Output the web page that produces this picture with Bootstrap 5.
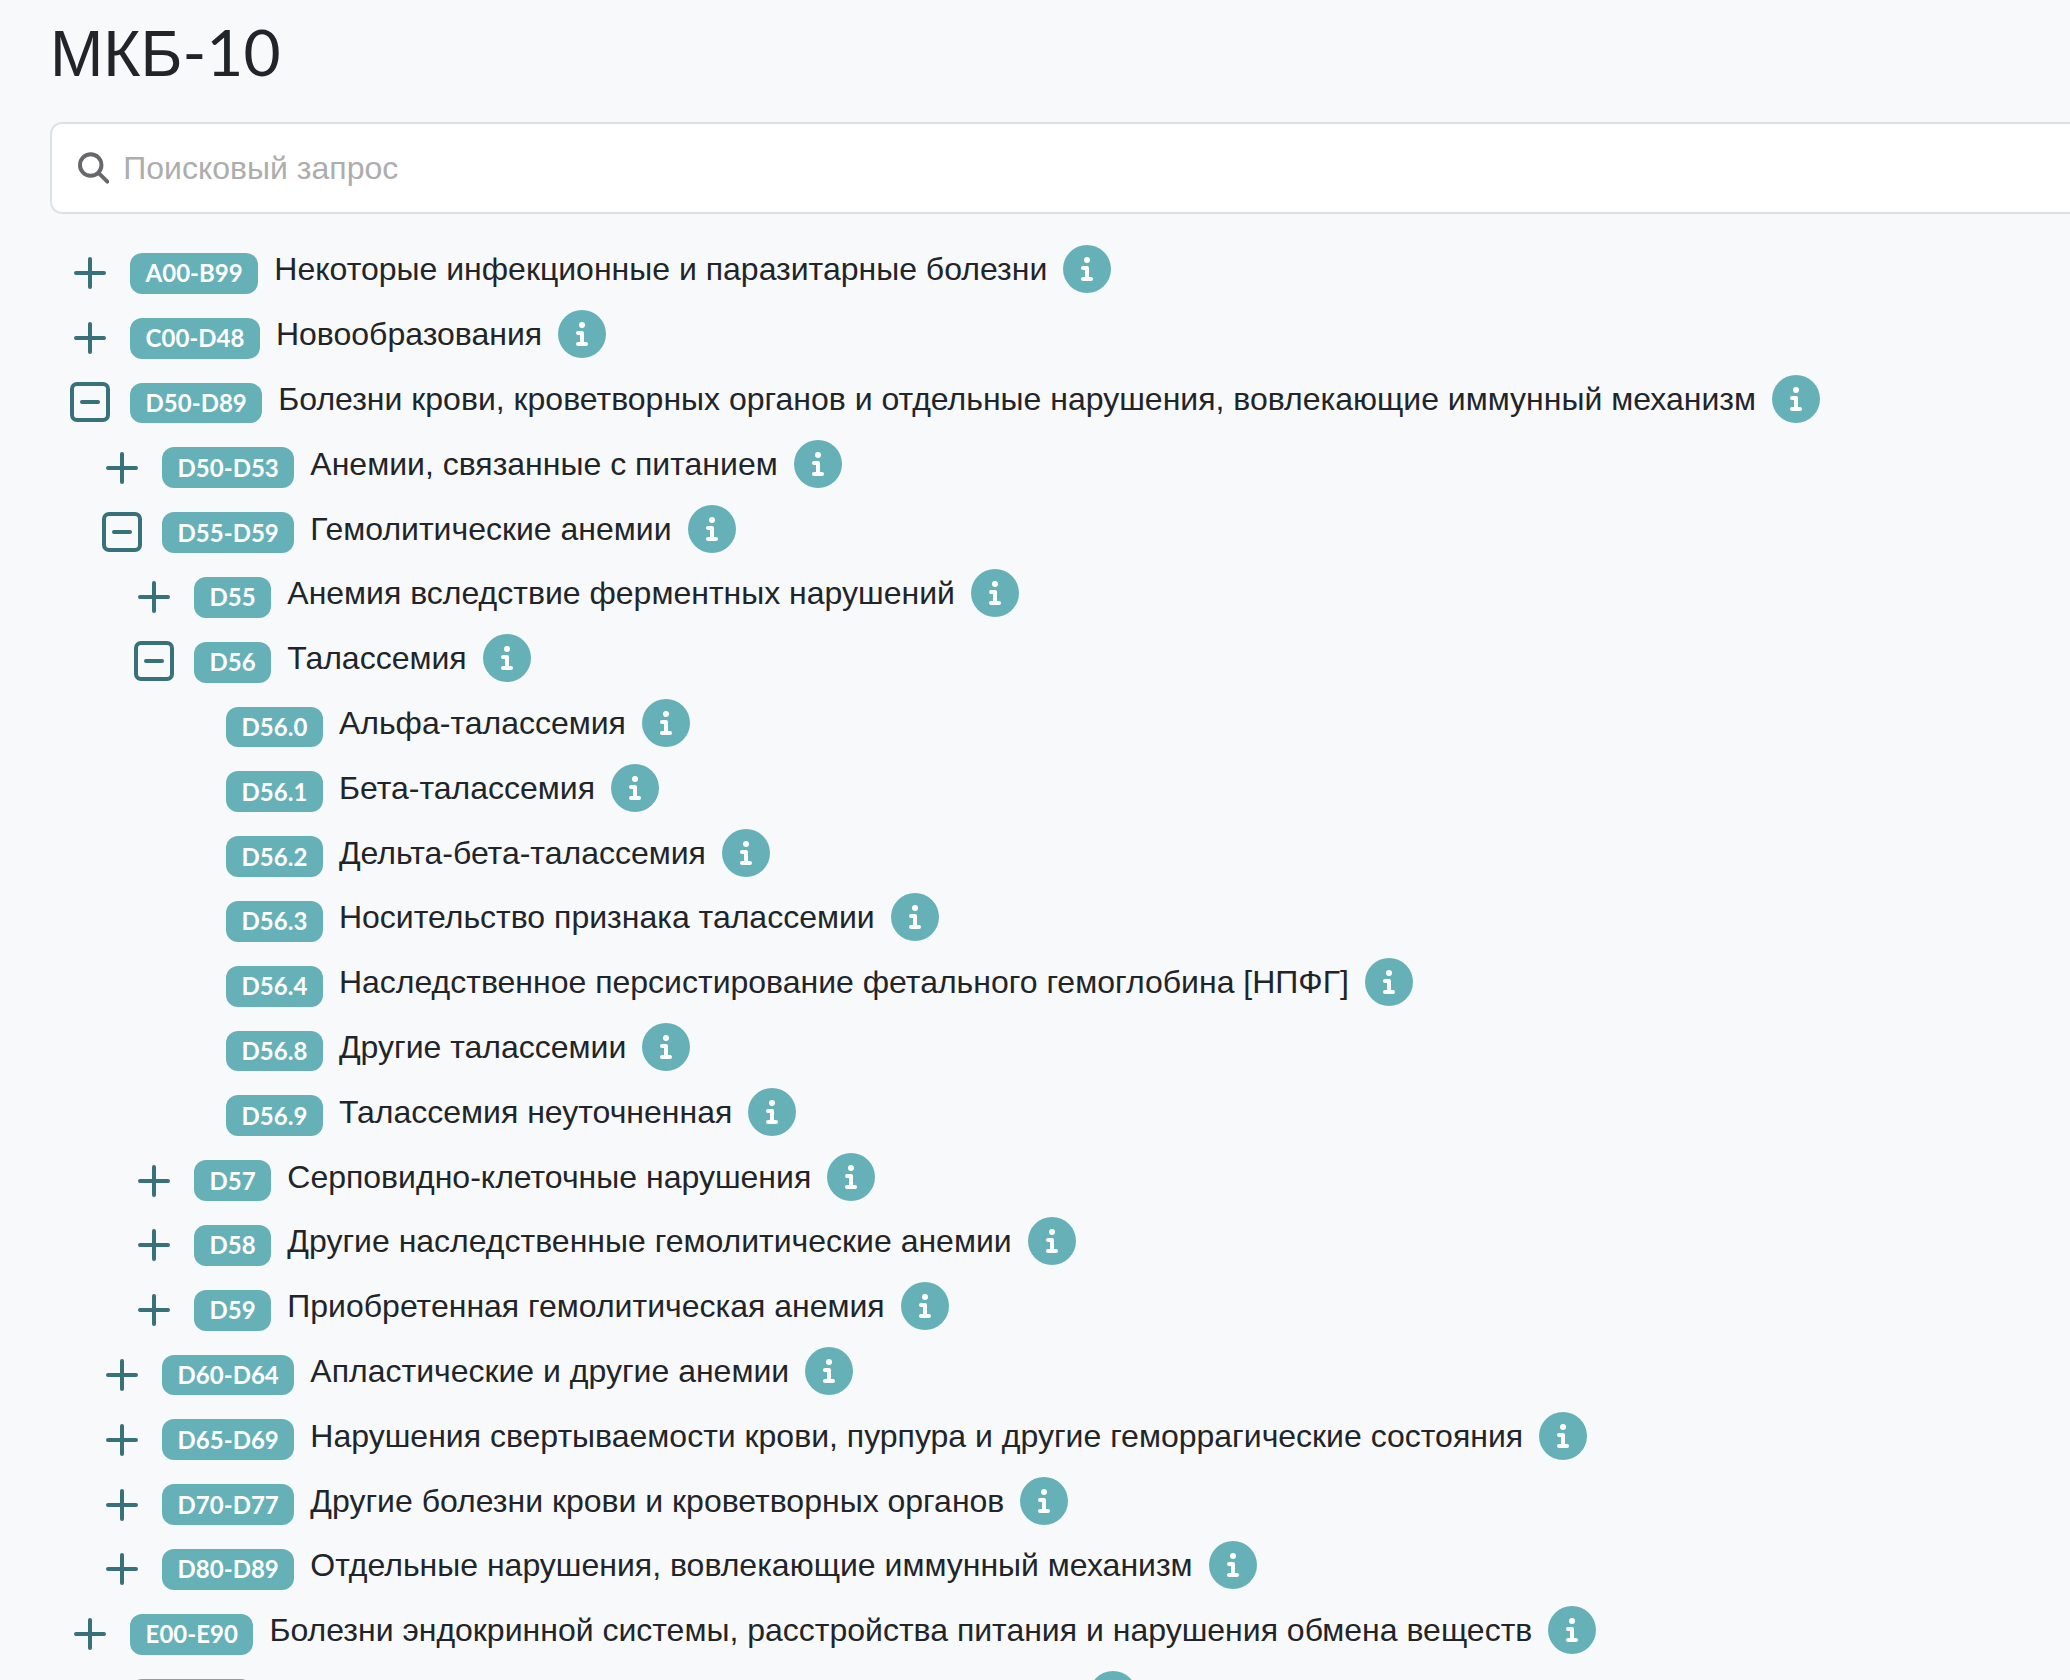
<!DOCTYPE html>
<html lang="ru">
<head>
<meta charset="utf-8">
<meta name="viewport" content="width=device-width, initial-scale=1">
<title>МКБ-10</title>
<link href="https://cdn.jsdelivr.net/npm/bootstrap@5.3.0/dist/css/bootstrap.min.css" rel="stylesheet">
<style>
  :root { --teal: #66b1b8; --teal-dark: #377179; }
  body { background: #f8f9fb; color: #212529; font-family: "Liberation Sans", sans-serif; font-size: 32px; }
  .page { padding: 14px 0 0 50px; }
  .page-title { font-size: 64px; line-height: 76px; margin-bottom: 30px; }
  .latin { font-family: Lato, sans-serif; }
  .search-box { height: 92px; border: 2px solid #dee2e6; border-right: 0; border-radius: 12px 0 0 12px; padding: 0 26px; gap: 14px; margin-bottom: 27px; }
  .search-box input { font-size: 32px; }
  .search-box input::placeholder { color: #adadad; }
  .search-box svg { color: #67676b; }
  .tree { padding-left: 16px; }
  .tree ul { padding-left: 32px; }
  .tree-row { font-size: 36px; line-height: 1.8; height: 1.8em; gap: 16px; white-space: nowrap; }
  .tree-text { font-size: 32px; line-height: 48px; gap: 16px; }
  .toggle { width: 48px; height: 48px; color: var(--teal-dark); }
  .code { font-family: Lato, sans-serif; font-size: 24px; border-radius: 12px; background: var(--teal); }
  .info { color: var(--teal); }
</style>
<script src="https://cdn.jsdelivr.net/npm/bootstrap@5.3.0/dist/js/bootstrap.bundle.min.js"></script>
</head>
<body>
<svg class="d-none" aria-hidden="true">
  <symbol id="plus" viewBox="0 0 48 48"><path d="M24 10v28M10 24h28" fill="none" stroke="currentColor" stroke-width="4" stroke-linecap="round"/></symbol>
  <symbol id="minus" viewBox="0 0 48 48"><rect x="6" y="5" width="36" height="36" rx="5" fill="none" stroke="currentColor" stroke-width="4"/><path d="M16 23h16" fill="none" stroke="currentColor" stroke-width="4" stroke-linecap="round"/></symbol>
  <symbol id="info" viewBox="0 0 48 48"><circle cx="24" cy="24" r="24" fill="currentColor"/><circle cx="24" cy="15" r="3" fill="#fff"/><path d="M20 23h4v11M20 34h8" fill="none" stroke="#fff" stroke-width="4" stroke-linecap="round" stroke-linejoin="round"/></symbol>
</svg>
<main class="page">
  <h1 class="page-title fw-normal">МКБ<span class="latin">-10</span></h1>
  <label class="search-box d-flex align-items-center bg-white">
    <svg width="32" height="32" viewBox="0 0 32 32" fill="none" stroke="currentColor" stroke-width="4" stroke-linecap="round" aria-hidden="true"><circle cx="13" cy="13" r="11"/><path d="M21 21l9 9"/></svg>
    <input type="search" class="form-control border-0 p-0 shadow-none" placeholder="Поисковый запрос" aria-label="Поисковый запрос">
  </label>

  <ul class="tree list-unstyled mb-0">
    <li><div class="tree-row d-flex align-items-center"><button class="toggle btn border-0 p-0 d-flex" aria-label="Развернуть"><svg width="48" height="48"><use href="#plus"/></svg></button><span class="code badge">A00-B99</span><span class="tree-text d-flex pb-2">Некоторые инфекционные и паразитарные болезни<button class="info btn border-0 p-0 d-flex" aria-label="Информация"><svg width="48" height="48"><use href="#info"/></svg></button></span></div></li>
    <li><div class="tree-row d-flex align-items-center"><button class="toggle btn border-0 p-0 d-flex" aria-label="Развернуть"><svg width="48" height="48"><use href="#plus"/></svg></button><span class="code badge">C00-D48</span><span class="tree-text d-flex pb-2">Новообразования<button class="info btn border-0 p-0 d-flex" aria-label="Информация"><svg width="48" height="48"><use href="#info"/></svg></button></span></div></li>
    <li><div class="tree-row d-flex align-items-center"><button class="toggle btn border-0 p-0 d-flex" aria-label="Свернуть"><svg width="48" height="48"><use href="#minus"/></svg></button><span class="code badge">D50-D89</span><span class="tree-text d-flex pb-2">Болезни крови, кроветворных органов и отдельные нарушения, вовлекающие иммунный механизм<button class="info btn border-0 p-0 d-flex" aria-label="Информация"><svg width="48" height="48"><use href="#info"/></svg></button></span></div>
      <ul class="list-unstyled">
        <li><div class="tree-row d-flex align-items-center"><button class="toggle btn border-0 p-0 d-flex" aria-label="Развернуть"><svg width="48" height="48"><use href="#plus"/></svg></button><span class="code badge">D50-D53</span><span class="tree-text d-flex pb-2">Анемии, связанные с питанием<button class="info btn border-0 p-0 d-flex" aria-label="Информация"><svg width="48" height="48"><use href="#info"/></svg></button></span></div></li>
        <li><div class="tree-row d-flex align-items-center"><button class="toggle btn border-0 p-0 d-flex" aria-label="Свернуть"><svg width="48" height="48"><use href="#minus"/></svg></button><span class="code badge">D55-D59</span><span class="tree-text d-flex pb-2">Гемолитические анемии<button class="info btn border-0 p-0 d-flex" aria-label="Информация"><svg width="48" height="48"><use href="#info"/></svg></button></span></div>
          <ul class="list-unstyled">
            <li><div class="tree-row d-flex align-items-center"><button class="toggle btn border-0 p-0 d-flex" aria-label="Развернуть"><svg width="48" height="48"><use href="#plus"/></svg></button><span class="code badge">D55</span><span class="tree-text d-flex pb-2">Анемия вследствие ферментных нарушений<button class="info btn border-0 p-0 d-flex" aria-label="Информация"><svg width="48" height="48"><use href="#info"/></svg></button></span></div></li>
            <li><div class="tree-row d-flex align-items-center"><button class="toggle btn border-0 p-0 d-flex" aria-label="Свернуть"><svg width="48" height="48"><use href="#minus"/></svg></button><span class="code badge">D56</span><span class="tree-text d-flex pb-2">Талассемия<button class="info btn border-0 p-0 d-flex" aria-label="Информация"><svg width="48" height="48"><use href="#info"/></svg></button></span></div>
              <ul class="list-unstyled">
                <li><div class="tree-row d-flex align-items-center"><span class="toggle"></span><span class="code badge">D56.0</span><span class="tree-text d-flex pb-2">Альфа-талассемия<button class="info btn border-0 p-0 d-flex" aria-label="Информация"><svg width="48" height="48"><use href="#info"/></svg></button></span></div></li>
                <li><div class="tree-row d-flex align-items-center"><span class="toggle"></span><span class="code badge">D56.1</span><span class="tree-text d-flex pb-2">Бета-талассемия<button class="info btn border-0 p-0 d-flex" aria-label="Информация"><svg width="48" height="48"><use href="#info"/></svg></button></span></div></li>
                <li><div class="tree-row d-flex align-items-center"><span class="toggle"></span><span class="code badge">D56.2</span><span class="tree-text d-flex pb-2">Дельта-бета-талассемия<button class="info btn border-0 p-0 d-flex" aria-label="Информация"><svg width="48" height="48"><use href="#info"/></svg></button></span></div></li>
                <li><div class="tree-row d-flex align-items-center"><span class="toggle"></span><span class="code badge">D56.3</span><span class="tree-text d-flex pb-2">Носительство признака талассемии<button class="info btn border-0 p-0 d-flex" aria-label="Информация"><svg width="48" height="48"><use href="#info"/></svg></button></span></div></li>
                <li><div class="tree-row d-flex align-items-center"><span class="toggle"></span><span class="code badge">D56.4</span><span class="tree-text d-flex pb-2">Наследственное персистирование фетального гемоглобина [НПФГ]<button class="info btn border-0 p-0 d-flex" aria-label="Информация"><svg width="48" height="48"><use href="#info"/></svg></button></span></div></li>
                <li><div class="tree-row d-flex align-items-center"><span class="toggle"></span><span class="code badge">D56.8</span><span class="tree-text d-flex pb-2">Другие талассемии<button class="info btn border-0 p-0 d-flex" aria-label="Информация"><svg width="48" height="48"><use href="#info"/></svg></button></span></div></li>
                <li><div class="tree-row d-flex align-items-center"><span class="toggle"></span><span class="code badge">D56.9</span><span class="tree-text d-flex pb-2">Талассемия неуточненная<button class="info btn border-0 p-0 d-flex" aria-label="Информация"><svg width="48" height="48"><use href="#info"/></svg></button></span></div></li>
              </ul>
            </li>
            <li><div class="tree-row d-flex align-items-center"><button class="toggle btn border-0 p-0 d-flex" aria-label="Развернуть"><svg width="48" height="48"><use href="#plus"/></svg></button><span class="code badge">D57</span><span class="tree-text d-flex pb-2">Серповидно-клеточные нарушения<button class="info btn border-0 p-0 d-flex" aria-label="Информация"><svg width="48" height="48"><use href="#info"/></svg></button></span></div></li>
            <li><div class="tree-row d-flex align-items-center"><button class="toggle btn border-0 p-0 d-flex" aria-label="Развернуть"><svg width="48" height="48"><use href="#plus"/></svg></button><span class="code badge">D58</span><span class="tree-text d-flex pb-2">Другие наследственные гемолитические анемии<button class="info btn border-0 p-0 d-flex" aria-label="Информация"><svg width="48" height="48"><use href="#info"/></svg></button></span></div></li>
            <li><div class="tree-row d-flex align-items-center"><button class="toggle btn border-0 p-0 d-flex" aria-label="Развернуть"><svg width="48" height="48"><use href="#plus"/></svg></button><span class="code badge">D59</span><span class="tree-text d-flex pb-2">Приобретенная гемолитическая анемия<button class="info btn border-0 p-0 d-flex" aria-label="Информация"><svg width="48" height="48"><use href="#info"/></svg></button></span></div></li>
          </ul>
        </li>
        <li><div class="tree-row d-flex align-items-center"><button class="toggle btn border-0 p-0 d-flex" aria-label="Развернуть"><svg width="48" height="48"><use href="#plus"/></svg></button><span class="code badge">D60-D64</span><span class="tree-text d-flex pb-2">Апластические и другие анемии<button class="info btn border-0 p-0 d-flex" aria-label="Информация"><svg width="48" height="48"><use href="#info"/></svg></button></span></div></li>
        <li><div class="tree-row d-flex align-items-center"><button class="toggle btn border-0 p-0 d-flex" aria-label="Развернуть"><svg width="48" height="48"><use href="#plus"/></svg></button><span class="code badge">D65-D69</span><span class="tree-text d-flex pb-2">Нарушения свертываемости крови, пурпура и другие геморрагические состояния<button class="info btn border-0 p-0 d-flex" aria-label="Информация"><svg width="48" height="48"><use href="#info"/></svg></button></span></div></li>
        <li><div class="tree-row d-flex align-items-center"><button class="toggle btn border-0 p-0 d-flex" aria-label="Развернуть"><svg width="48" height="48"><use href="#plus"/></svg></button><span class="code badge">D70-D77</span><span class="tree-text d-flex pb-2">Другие болезни крови и кроветворных органов<button class="info btn border-0 p-0 d-flex" aria-label="Информация"><svg width="48" height="48"><use href="#info"/></svg></button></span></div></li>
        <li><div class="tree-row d-flex align-items-center"><button class="toggle btn border-0 p-0 d-flex" aria-label="Развернуть"><svg width="48" height="48"><use href="#plus"/></svg></button><span class="code badge">D80-D89</span><span class="tree-text d-flex pb-2">Отдельные нарушения, вовлекающие иммунный механизм<button class="info btn border-0 p-0 d-flex" aria-label="Информация"><svg width="48" height="48"><use href="#info"/></svg></button></span></div></li>
      </ul>
    </li>
    <li><div class="tree-row d-flex align-items-center"><button class="toggle btn border-0 p-0 d-flex" aria-label="Развернуть"><svg width="48" height="48"><use href="#plus"/></svg></button><span class="code badge">E00-E90</span><span class="tree-text d-flex pb-2">Болезни эндокринной системы, расстройства питания и нарушения обмена веществ<button class="info btn border-0 p-0 d-flex" aria-label="Информация"><svg width="48" height="48"><use href="#info"/></svg></button></span></div></li>
    <li><div class="tree-row d-flex align-items-center"><button class="toggle btn border-0 p-0 d-flex" aria-label="Развернуть"><svg width="48" height="48"><use href="#plus"/></svg></button><span class="code badge">F00-F99</span><span class="tree-text d-flex pb-2">Психические расстройства и расстройства поведения<button class="info btn border-0 p-0 d-flex" aria-label="Информация"><svg width="48" height="48"><use href="#info"/></svg></button></span></div></li>
  </ul>
</main>
</body>
</html>
